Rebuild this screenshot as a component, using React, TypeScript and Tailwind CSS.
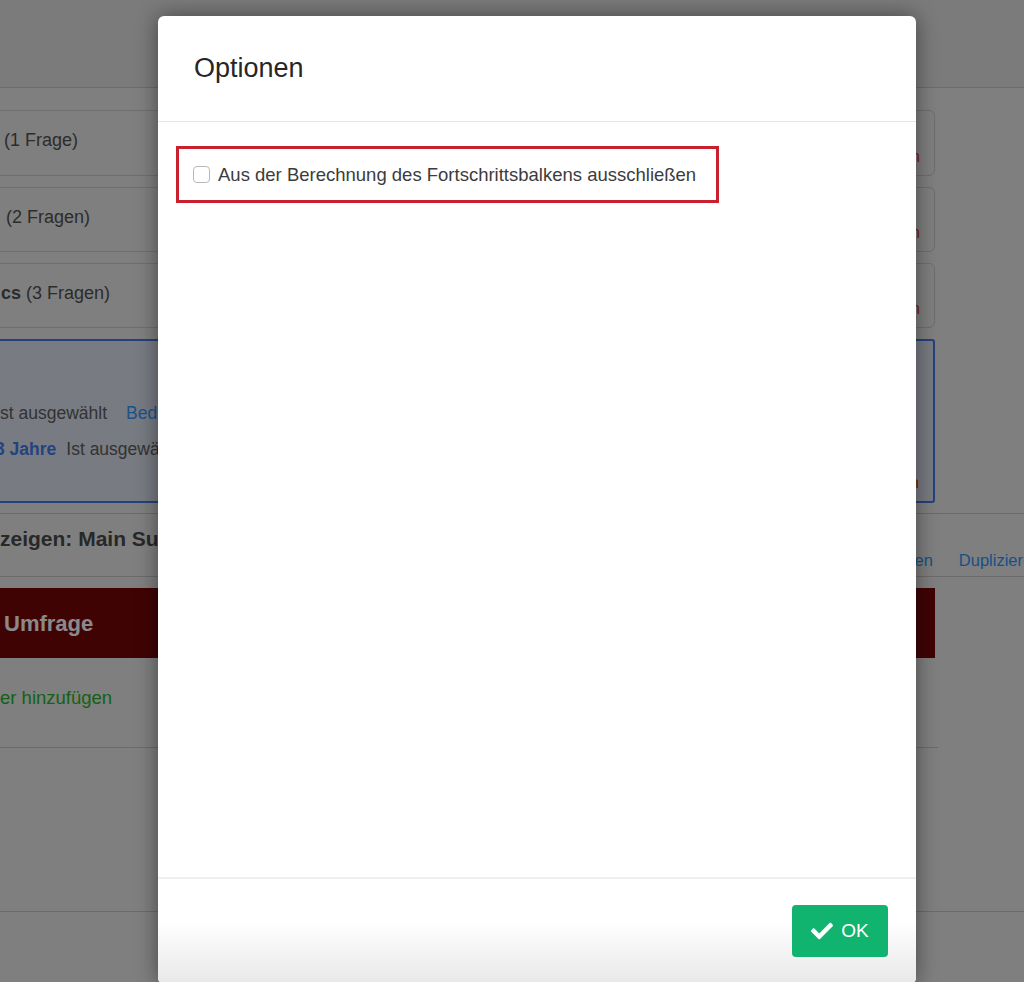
import { FaCheck } from "react-icons/fa";

const BLOCKS = [
  { bold: "", rest: "(1 Frage)", pad: "pl-[11px]", h: "h-[66px]" },
  { bold: "", rest: "(2 Fragen)", pad: "pl-[13px]", h: "h-[65px]" },
  { bold: "cs", rest: " (3 Fragen)", pad: "pl-[8px]", h: "h-[65px]" },
];

function SurveyFlowBackground() {
  return (
    <div className="flex flex-col">
      {/* Top bar */}
      <div className="h-[88px] bg-[#cdcdcd] border-b border-[#b2b2b2]" />

      {/* Blocks */}
      <div className="-ml-[8px] w-[943px] pt-[22px] flex flex-col gap-[11px]">
        {BLOCKS.map((b, i) => (
          <div
            key={i}
            className={`${b.h} ${b.pad} pr-[14px] flex justify-between rounded-[6px] border border-[#b8b8b8] bg-[#d4d4d4]`}
          >
            <div className="pt-[17px] text-[18px] leading-[24px] text-[#4a4a4a] whitespace-nowrap">
              {b.bold && <span className="font-bold">{b.bold}</span>}
              {b.rest}
            </div>
            <div className="self-end pb-[8px] text-[16px] leading-[20px] text-[#d42a10]">Löschen</div>
          </div>
        ))}

        {/* Selected branch */}
        <div className="h-[164px] pl-[6px] pr-[14px] flex justify-between rounded-[3px] border-2 border-[#3d6dd2] bg-[#c8ced9]">
          <div className="pt-[54px] text-[17.5px] leading-[36px] whitespace-nowrap">
            <div className="flex">
              <span className="text-[#555555]">st ausgewählt</span>
              <span className="ml-[19px] text-[#2f8ae6]">Bedingung hinzufügen</span>
            </div>
            <div className="flex -ml-[5px]">
              <span className="font-bold text-[#3b6fd6]">3 Jahre</span>
              <span className="ml-[10px] text-[#555555]">Ist ausgewählt</span>
            </div>
          </div>
          <div className="self-end pb-[8px] text-[16px] leading-[20px] text-[#d42a10]">Löschen</div>
        </div>
      </div>

      {/* Block header row */}
      <div className="mt-[10px] h-[64px] flex border-y border-[#b2b2b2] whitespace-nowrap">
        <div className="w-[840px] shrink-0 pt-[11px] text-[21px] leading-[28px] font-bold text-[#444444]">
          zeigen: Main Survey
        </div>
        <div className="self-end pb-[6px] pl-[2px] flex gap-[26px] text-[16.5px] leading-[20px] text-[#2b86e0]">
          <span>Verschieben</span>
          <span>Duplizieren</span>
        </div>
      </div>

      {/* End of survey */}
      <div className="mt-[11px] w-[935px] h-[70px] flex items-center pl-[4px] bg-[#6c0508] text-[22px] font-bold text-[#e6e6e6]">
        Umfrage
      </div>
      <div className="w-[938px] h-[90px] pt-[28px] border-b border-[#b2b2b2] text-[18.5px] leading-[24px] text-[#26a226]">
        er hinzufügen
      </div>

      <div className="h-[163px]" />
      <div className="border-t border-[#b2b2b2]" />
    </div>
  );
}

function OptionsModal() {
  return (
    <div className="absolute left-[158px] top-[16px] w-[758px] h-[968px] flex flex-col rounded-[6px] bg-white shadow-[0_0_22px_rgba(0,0,0,0.45)] overflow-hidden">
      <div className="h-[106px] shrink-0 flex items-center px-[36px] border-b border-[#e6e6e6]">
        <h2 className="text-[27px] text-[#262626]">Optionen</h2>
      </div>

      <div className="flex-1 pt-[24px] pl-[18px]">
        <label className="w-[543px] h-[57px] flex items-center gap-[8px] pl-[14px] border-[3px] border-[#c8202f]">
          <input
            type="checkbox"
            className="appearance-none w-[17px] h-[17px] rounded-[4px] border border-[#b8b8b8] bg-white"
          />
          <span className="text-[18.5px] text-[#3c3c3c] whitespace-nowrap">
            Aus der Berechnung des Fortschrittsbalkens ausschließen
          </span>
        </label>
      </div>

      <div className="h-[107px] shrink-0 flex justify-end pt-[26px] pr-[28px] border-t-2 border-[#efefef] bg-gradient-to-b from-white from-40% to-[#e8e8e8]">
        <button className="w-[96px] h-[52px] flex items-center justify-center gap-[8px] rounded-[4px] bg-[#10b46e] text-white text-[19px]">
          <FaCheck className="w-[22px] h-[22px]" />
          OK
        </button>
      </div>
    </div>
  );
}

export default function App() {
  return (
    <div className="relative w-[1024px] h-[982px] overflow-hidden bg-[#d4d4d4] font-['Liberation_Sans',Arial,sans-serif]">
      <SurveyFlowBackground />
      {/* Backdrop */}
      <div className="absolute inset-0 bg-black/40" />
      <OptionsModal />
    </div>
  );
}
